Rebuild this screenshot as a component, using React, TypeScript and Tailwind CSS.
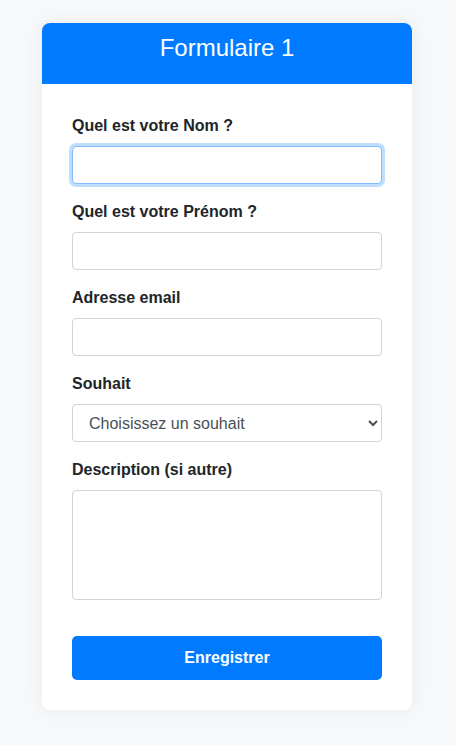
import React from "react";

const fields = [
  { id: "nom", label: "Quel est votre Nom ?", focused: true },
  { id: "prenom", label: "Quel est votre Prénom ?" },
  { id: "email", label: "Adresse email" },
];

export default function App() {
  return (
    <div
      className="min-h-screen bg-[#f7f8fa] pt-[23px] pb-[35px] text-[#212529]"
      style={{ fontFamily: '"Liberation Sans", Arial, sans-serif' }}
    >
      <div className="ml-[42px] w-[370px] overflow-hidden rounded-lg bg-white shadow-[0_0_20px_rgba(0,0,0,0.06)]">
        <div className="h-[61px] bg-[#007bff] pt-[11px] text-center">
          <h1 className="text-[24px] leading-[1.2] font-normal text-white">Formulaire 1</h1>
        </div>
        <form className="p-[30px]">
          {fields.map((f) => (
            <div key={f.id} className="mb-4">
              <label htmlFor={f.id} className="mb-2 block text-[16px] leading-6 font-bold">
                {f.label}
              </label>
              <input
                id={f.id}
                type="text"
                className={
                  f.focused
                    ? "block h-[38px] w-full rounded border border-[#80bdff] bg-white px-3 shadow-[0_0_0_3px_rgba(0,123,255,0.25)] outline-none"
                    : "block h-[38px] w-full rounded border border-[#ced4da] bg-white px-3 outline-none"
                }
              />
            </div>
          ))}
          <div className="mb-4">
            <label htmlFor="souhait" className="mb-2 block text-[16px] leading-6 font-bold">
              Souhait
            </label>
            <select
              id="souhait"
              className="block h-[38px] w-full rounded border border-[#ced4da] bg-white px-3 text-[16px] text-[#495057] outline-none"
            >
              <option>Choisissez un souhait</option>
            </select>
          </div>
          <div>
            <label htmlFor="description" className="mb-2 block text-[16px] leading-6 font-bold">
              Description (si autre)
            </label>
            <textarea
              id="description"
              className="block h-[110px] w-full resize-none rounded border border-[#ced4da] bg-white px-3 outline-none"
            />
          </div>
          <button
            type="button"
            className="mt-9 block h-[44px] w-full rounded-[5px] bg-[#007bff] text-[16px] font-bold text-white"
          >
            Enregistrer
          </button>
        </form>
      </div>
    </div>
  );
}
